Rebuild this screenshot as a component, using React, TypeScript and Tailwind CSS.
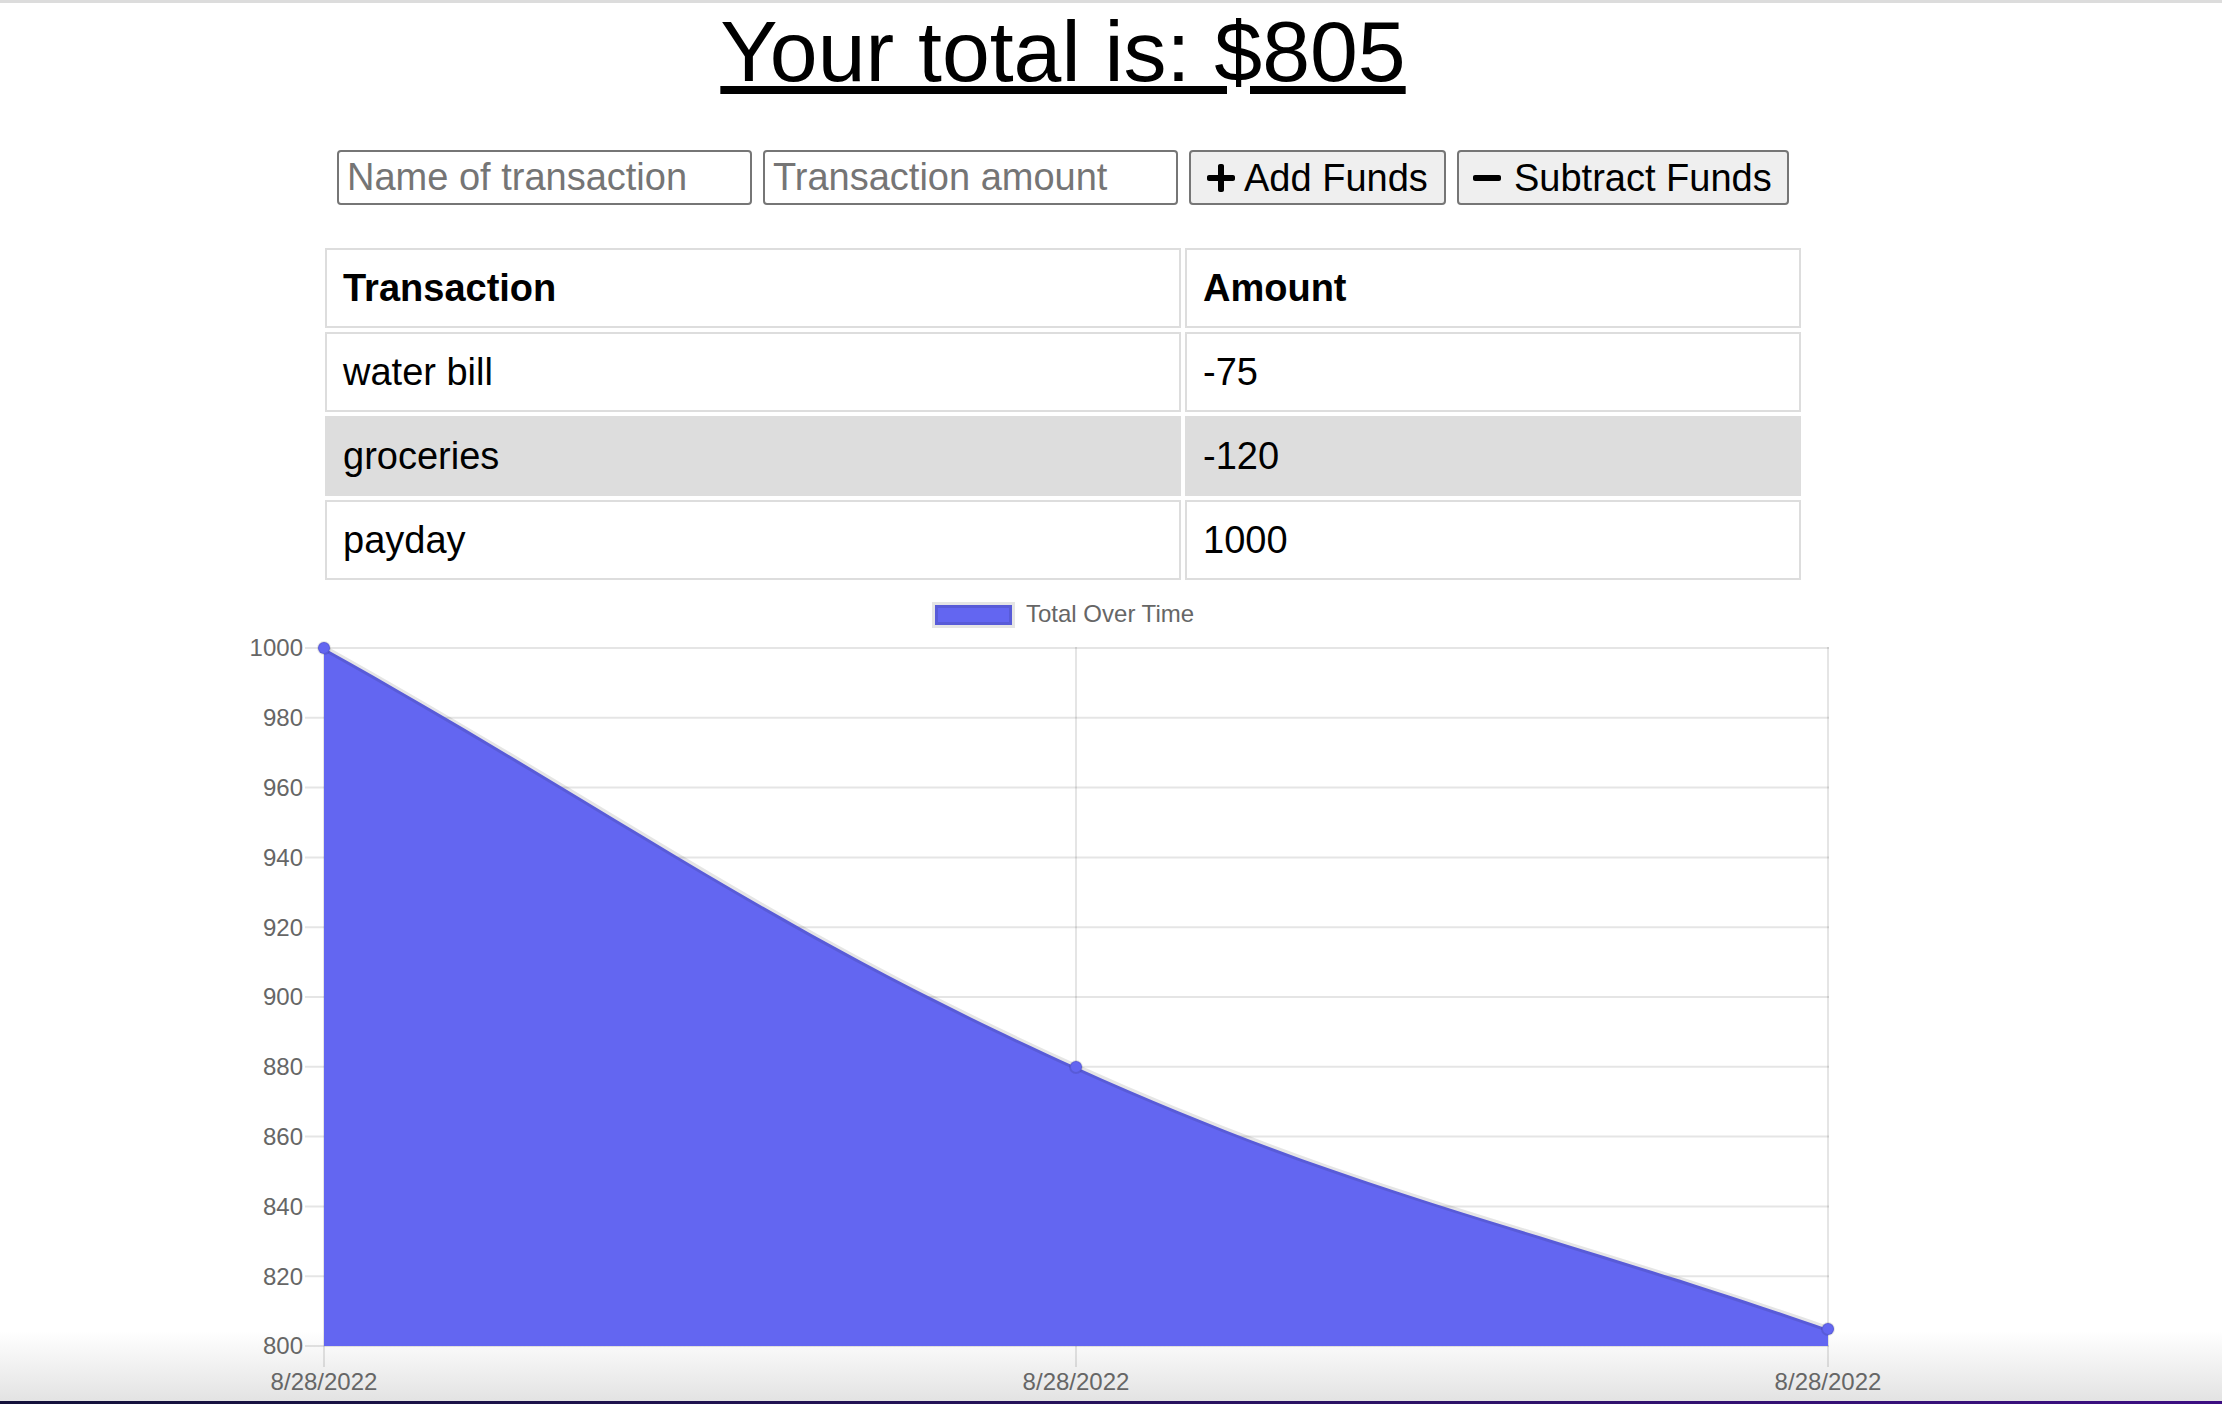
import React from "react";
import { FaPlus, FaMinus } from "react-icons/fa";

const rows = [
  { name: "water bill", amount: "-75", shade: false },
  { name: "groceries", amount: "-120", shade: true },
  { name: "payday", amount: "1000", shade: false },
];

const Y0 = 648;
const Y1 = 1346;
const yOf = (v: number) => Y0 + ((1000 - v) / 200) * (Y1 - Y0);
const ticks = [1000, 980, 960, 940, 920, 900, 880, 860, 840, 820, 800];
const xs = [324, 1076, 1828];

const curve =
  "M324,648 C624.8,815.6 763.5,925.5 1076,1067 C1365.1,1197.9 1527.2,1224.2 1828,1329";

function Chart() {
  const grid = "rgba(0,0,0,0.1)";
  return (
    <svg
      width={2126}
      height={814}
      viewBox="0 590 2126 814"
      className="block"
      style={{ fontFamily: "'Liberation Sans', Arial, sans-serif" }}
    >
      {/* legend */}
      <rect x={935} y={605} width={77} height={20} fill="#6366f1" stroke={grid} strokeWidth={6} />
      <text x={1026} y={616} fontSize={24} fill="#666" dominantBaseline="middle">
        Total Over Time
      </text>
      {/* horizontal grid */}
      {ticks.map((t) => (
        <line key={t} x1={305} x2={1829} y1={yOf(t)} y2={yOf(t)} stroke={grid} strokeWidth={2} />
      ))}
      {/* vertical grid */}
      {xs.map((x) => (
        <line key={x} x1={x} x2={x} y1={647} y2={1367} stroke={grid} strokeWidth={2} />
      ))}
      {/* y labels */}
      {ticks.map((t) => (
        <text key={t} x={303} y={yOf(t) + 2} fontSize={24} fill="#666" textAnchor="end" dominantBaseline="middle">
          {t}
        </text>
      ))}
      {/* x labels */}
      {xs.map((x) => (
        <text key={x} x={x} y={1384} fontSize={24} fill="#666" textAnchor="middle" dominantBaseline="middle">
          8/28/2022
        </text>
      ))}
      {/* area */}
      <path d={`${curve} L1828,1346 L324,1346 Z`} fill="#6366f1" />
      <path d={curve} fill="none" stroke={grid} strokeWidth={6} />
      {[
        [324, 648],
        [1076, 1067],
        [1828, 1329],
      ].map(([x, y]) => (
        <circle key={x} cx={x} cy={y} r={6} fill="#6366f1" stroke={grid} strokeWidth={2} />
      ))}
    </svg>
  );
}

export default function App() {
  return (
    <div className="relative w-[2222px] h-[1404px] overflow-hidden bg-white font-['Liberation_Sans',Arial,sans-serif] text-black">
      <div className="absolute left-0 right-0 bottom-[3px] h-[70px] bg-linear-to-b from-[rgba(255,255,255,0)] to-[#e3e3e3]" />
      <div className="absolute top-0 left-0 right-0 h-[3px] bg-[#dcdcdc]" />
      <div className="relative w-[2126px] flex flex-col items-center">
        <h1 className="mt-[9px] h-[85px] text-[86px] leading-[85px] underline font-normal whitespace-nowrap">
          Your total is: $805
        </h1>

        <div className="mt-[56px] flex items-center gap-[11px] h-[55px]">
          <input
            placeholder="Name of transaction"
            className="w-[415px] h-[55px] bg-white border-2 border-[#767676] rounded-[4px] px-[8px] text-[38px] placeholder:text-[#757575] outline-none"
          />
          <input
            placeholder="Transaction amount"
            className="w-[415px] h-[55px] bg-white border-2 border-[#767676] rounded-[4px] px-[8px] text-[38px] placeholder:text-[#757575] outline-none"
          />
          <button className="w-[257px] h-[55px] flex items-center gap-[7px] pl-[14px] bg-[#efefef] border-2 border-[#767676] rounded-[4px] text-[38px] leading-none whitespace-nowrap">
            <FaPlus size={32} />
            <span>Add Funds</span>
          </button>
          <button className="w-[332px] h-[55px] flex items-center gap-[11px] pl-[12px] bg-[#efefef] border-2 border-[#767676] rounded-[4px] text-[38px] leading-none whitespace-nowrap">
            <FaMinus size={32} />
            <span>Subtract Funds</span>
          </button>
        </div>

        <div className="mt-[43px] grid grid-cols-[856px_616px] gap-[4px] text-[38px]">
          <div className="h-[80px] border-2 border-[#dddddd] bg-white px-[16px] flex items-center font-bold">Transaction</div>
          <div className="h-[80px] border-2 border-[#dddddd] bg-white px-[16px] flex items-center font-bold">Amount</div>
          {rows.map((r) => (
            <React.Fragment key={r.name}>
              <div
                className={`h-[80px] border-2 border-[#dddddd] px-[16px] flex items-center ${r.shade ? "bg-[#dddddd]" : "bg-white"}`}
              >
                {r.name}
              </div>
              <div
                className={`h-[80px] border-2 border-[#dddddd] px-[16px] flex items-center ${r.shade ? "bg-[#dddddd]" : "bg-white"}`}
              >
                {r.amount}
              </div>
            </React.Fragment>
          ))}
        </div>

        <div className="mt-[10px] self-stretch">
          <Chart />
        </div>
      </div>

      <div className="absolute left-0 right-0 bottom-0 h-[3px] bg-linear-to-r from-[#13113a] to-[#3c0e82]" />
    </div>
  );
}
